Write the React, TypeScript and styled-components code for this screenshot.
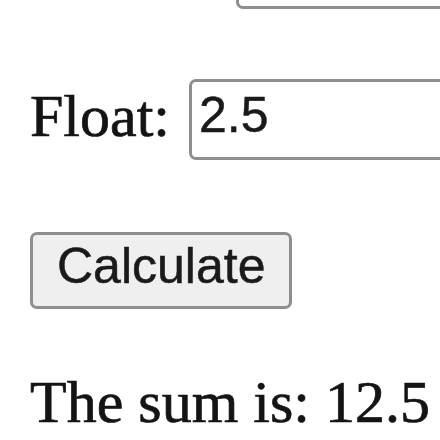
import React from "react";
import styled, { createGlobalStyle } from "styled-components";

const Global = createGlobalStyle`
  html, body {
    margin: 0;
    padding: 0;
    background: #ffffff;
    overflow: hidden;
  }
  body {
    width: 440px;
    height: 440px;
    font-family: "Liberation Serif", "Times New Roman", serif;
    color: #111;
  }
`;

const Page = styled.main`
  display: flex;
  flex-direction: column;
  padding: 0 0 0 30px;
  margin-top: -72px;
`;

const Form = styled.form`
  display: flex;
  flex-direction: column;
  align-items: flex-start;
  gap: 70px;
`;

const Row = styled.div`
  display: flex;
  align-items: flex-start;
  gap: 19px;
  white-space: nowrap;
`;

const Label = styled.label`
  font-family: "Liberation Serif", "Times New Roman", serif;
  font-size: 60px;
  line-height: 60px;
  margin-top: 7px;
  color: #141414;
  -webkit-text-stroke: 0.7px #141414;
`;

const Input = styled.input`
  box-sizing: border-box;
  width: 600px;
  height: 81px;
  flex: none;
  margin: 0;
  padding: 0 0 10px 7px;
  border: 3px solid #8e8e8e;
  border-radius: 7px;
  background: #fff;
  font-family: "Liberation Sans", Arial, sans-serif;
  font-size: 50px;
  color: #1a1a1a;
  -webkit-text-stroke: 0.5px #1a1a1a;
  outline: none;
`;

const Button = styled.button`
  margin: 2px 0 0 0;
  padding: 6px 24px 15px 24px;
  border: 3px solid #8e8e8e;
  border-radius: 7px;
  background: #efefef;
  font-family: "Liberation Sans", Arial, sans-serif;
  font-size: 50px;
  line-height: 50px;
  color: #1a1a1a;
  -webkit-text-stroke: 0.5px #1a1a1a;
  cursor: pointer;
`;

const Result = styled.p`
  margin: 63px 0 0 0;
  font-family: "Liberation Serif", "Times New Roman", serif;
  font-size: 60px;
  line-height: 60px;
  white-space: nowrap;
  color: #141414;
  -webkit-text-stroke: 0.7px #141414;
`;

export default function App() {
  return (
    <>
      <Global />
      <Page>
        <Form onSubmit={(e) => e.preventDefault()}>
          <Row>
            <Label htmlFor="int">Integer:</Label>
            <Input id="int" type="text" defaultValue="10" />
          </Row>
          <Row>
            <Label htmlFor="float">Float:</Label>
            <Input id="float" type="text" defaultValue="2.5" />
          </Row>
          <Button type="submit">Calculate</Button>
        </Form>
        <Result>The sum is: 12.5</Result>
      </Page>
    </>
  );
}
